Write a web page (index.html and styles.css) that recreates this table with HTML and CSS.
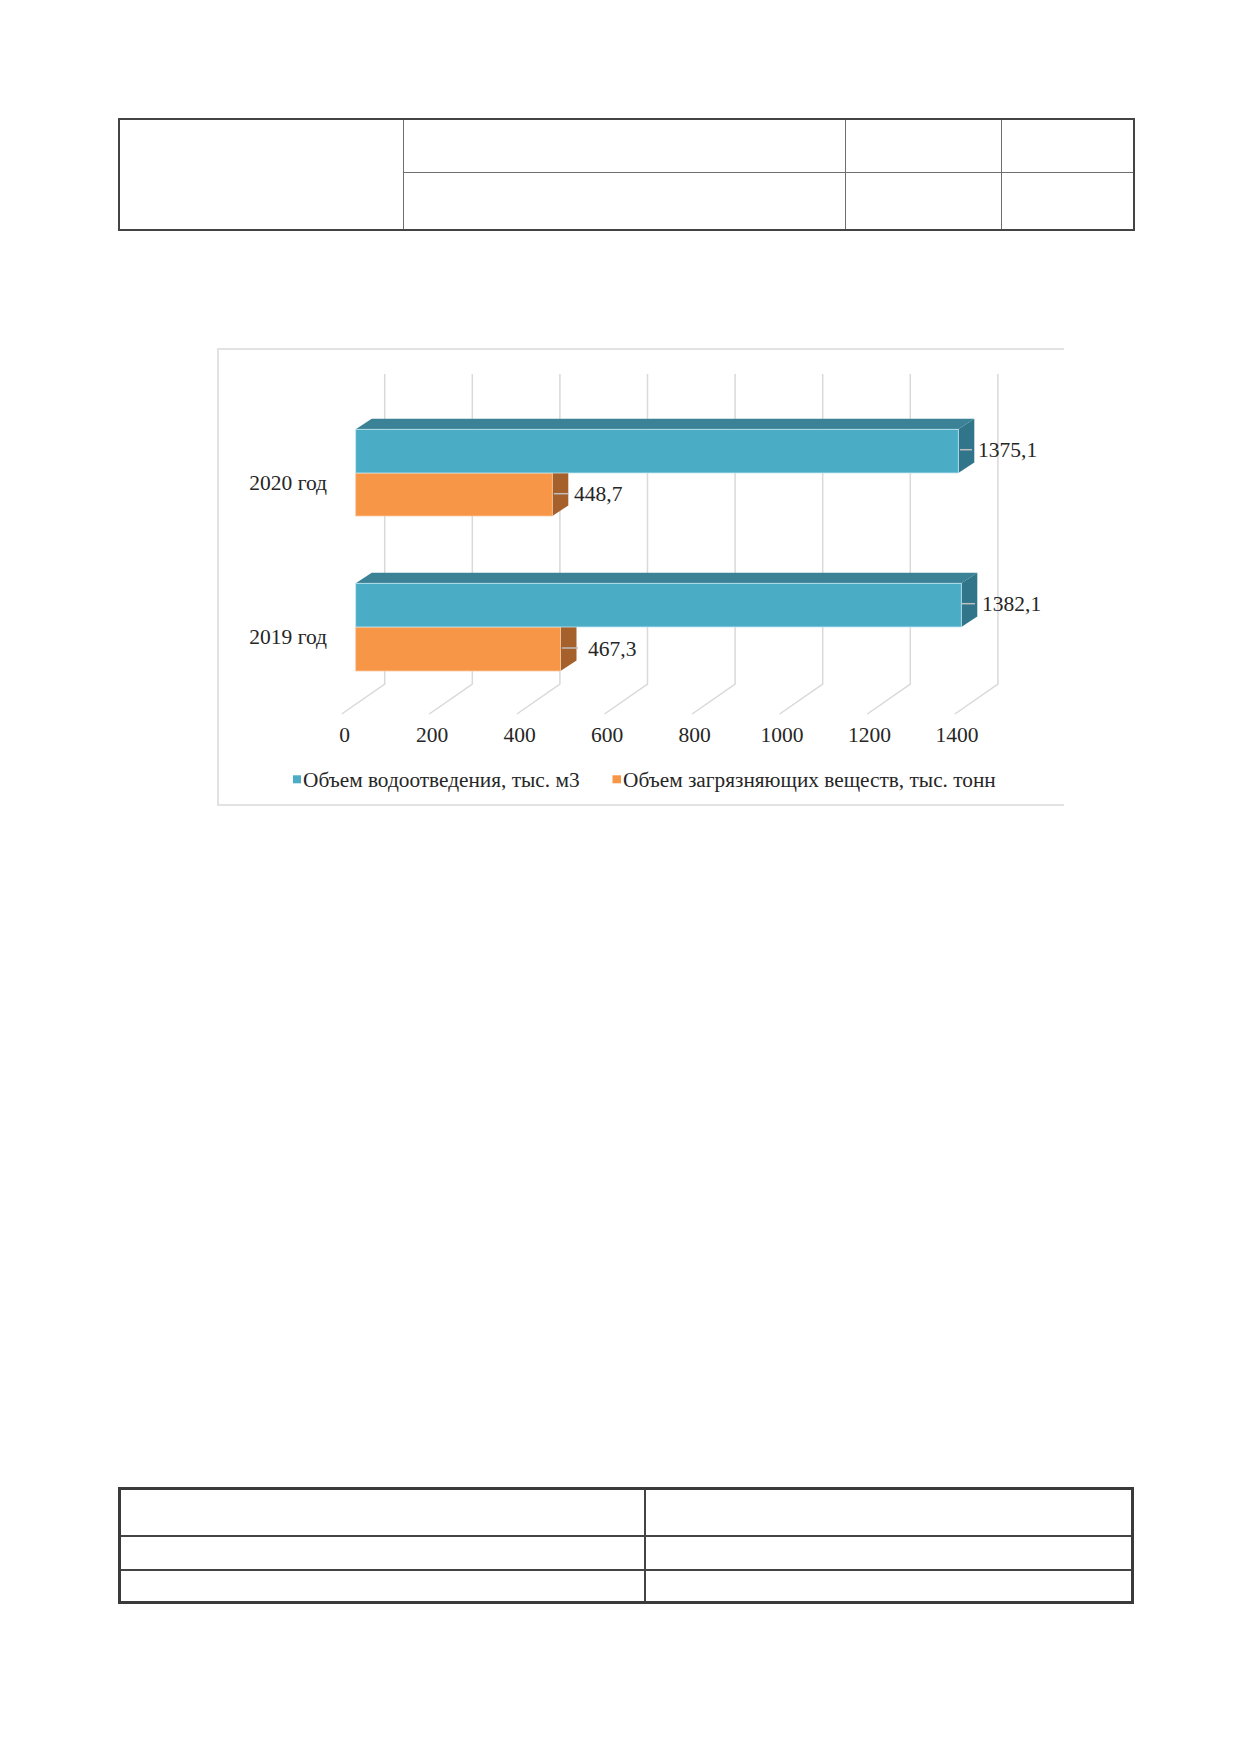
FILE: index.html
```html
<!DOCTYPE html>
<html lang="ru">
<head>
<meta charset="utf-8">
<title>Диаграмма</title>
<link rel="stylesheet" href="styles.css">
</head>
<body>
<div class="page">
  <table class="t1">
    <colgroup><col class="c1"><col class="c2"><col class="c3"><col class="c4"></colgroup>
    <tr class="r1"><td rowspan="2"></td><td></td><td></td><td></td></tr>
    <tr class="r2"><td></td><td></td><td></td></tr>
  </table>

  <div class="chart">
    <svg class="chart-svg" viewBox="220 349 843 454" width="843" height="454" xmlns="http://www.w3.org/2000/svg">
      <g class="grid" fill="none" stroke="#d9d9d9" stroke-width="1.5">
        <polyline points="385.7,373 385.7,683 342.7,713"/>
        <polyline points="473.3,373 473.3,683 430.3,713"/>
        <polyline points="560.9,373 560.9,683 517.9,713"/>
        <polyline points="648.5,373 648.5,683 605.5,713"/>
        <polyline points="736.1,373 736.1,683 693.1,713"/>
        <polyline points="823.7,373 823.7,683 780.7,713"/>
        <polyline points="911.3,373 911.3,683 868.3,713"/>
        <polyline points="998.9,373 998.9,683 955.9,713"/>
      </g>

      <!-- 2020 -->
      <polygon points="553.3,472 569.3,461.5 569.3,504.5 553.3,515" fill="#a5602b"/>
      <rect x="356.7" y="472" width="196.6" height="43" fill="#f79646" stroke="#fbc9a0" stroke-width="0.8"/>
      <polygon points="356.7,428.3 372.7,417.8 975.3,417.8 959.3,428.3" fill="#3b8297"/>
      <polygon points="959.3,428.3 975.3,417.8 975.3,461.5 959.3,472" fill="#31758a"/>
      <rect x="356.7" y="428.3" width="602.6" height="43.7" fill="#4bacc6" stroke="#c4e6f0" stroke-width="0.8"/>

      <!-- 2019 -->
      <polygon points="561.5,626 577.5,615.5 577.5,659.5 561.5,670" fill="#a5602b"/>
      <rect x="356.7" y="626" width="204.8" height="44" fill="#f79646" stroke="#fbc9a0" stroke-width="0.8"/>
      <polygon points="356.7,582.3 372.7,571.8 978.3,571.8 962.3,582.3" fill="#3b8297"/>
      <polygon points="962.3,582.3 978.3,571.8 978.3,615.5 962.3,626" fill="#31758a"/>
      <rect x="356.7" y="582.3" width="605.6" height="43.7" fill="#4bacc6" stroke="#c4e6f0" stroke-width="0.8"/>

      <g class="leaders" stroke="#bfbfbf" stroke-width="1.5">
        <line x1="961" y1="448.7" x2="973" y2="448.7"/>
        <line x1="555" y1="492.7" x2="569" y2="492.7"/>
        <line x1="963" y1="602.7" x2="976" y2="602.7"/>
        <line x1="563" y1="647" x2="579" y2="647"/>
      </g>

      <g class="lbl">
        <text x="979" y="456">1375,1</text>
        <text x="575" y="500">448,7</text>
        <text x="983" y="610">1382,1</text>
        <text x="589" y="654.5">467,3</text>
        <text x="328" y="489" text-anchor="end">2020 год</text>
        <text x="328" y="642.5" text-anchor="end">2019 год</text>
      </g>

      <g class="lbl" text-anchor="middle">
        <text x="345.5" y="740.5">0</text>
        <text x="433" y="740.5">200</text>
        <text x="520.5" y="740.5">400</text>
        <text x="608" y="740.5">600</text>
        <text x="695.5" y="740.5">800</text>
        <text x="783" y="740.5">1000</text>
        <text x="870.5" y="740.5">1200</text>
        <text x="958" y="740.5">1400</text>
      </g>

      <rect x="294" y="774.3" width="8" height="8" fill="#4bacc6"/>
      <text class="leg" x="304" y="786">Объем водоотведения, тыс. м3</text>
      <rect x="613.5" y="774.3" width="8.5" height="8" fill="#f79646"/>
      <text class="leg" x="624" y="786">Объем загрязняющих веществ, тыс. тонн</text>
    </svg>
  </div>

  <table class="t2">
    <colgroup><col class="d1"><col class="d2"></colgroup>
    <tr class="s1"><td></td><td></td></tr>
    <tr class="s2"><td></td><td></td></tr>
    <tr class="s3"><td></td><td></td></tr>
  </table>
</div>
</body>
</html>
```

FILE: styles.css
```css
html, body {
  margin: 0;
  padding: 0;
  background: #ffffff;
}

body {
  font-family: "Liberation Serif", "Times New Roman", serif;
  color: #262626;
}

.page {
  width: 1240px;
  min-height: 1754px;
  box-sizing: border-box;
  padding: 118px 0 0 118px;
  display: flex;
  flex-direction: column;
  align-items: flex-start;
}

.t1 {
  border-collapse: collapse;
  table-layout: fixed;
  width: 1015px;
  border: 2px solid #444444;
}

.t1 td {
  border: 1px solid #6e6e6e;
  padding: 0;
}

.t1 .c1 { width: 284px; }
.t1 .c2 { width: 442px; }
.t1 .c3 { width: 156px; }
.t1 .c4 { width: 133px; }

.t1 .r1 { height: 53px; }
.t1 .r2 { height: 58px; }

.chart {
  margin-top: 117px;
  margin-left: 99px;
  width: 845px;
  height: 454px;
  border-top: 2px solid #e2e2e2;
  border-left: 2px solid #e2e2e2;
  border-bottom: 2px solid #e2e2e2;
  box-sizing: content-box;
  display: flex;
}

.chart-svg {
  display: block;
  overflow: visible;
}

.lbl {
  font-family: "Liberation Serif", "Times New Roman", serif;
  font-size: 21.5px;
  fill: #262626;
}

.leg {
  font-family: "Liberation Serif", "Times New Roman", serif;
  font-size: 21.3px;
  fill: #262626;
}

.t2 {
  margin-top: 681px;
  border-collapse: collapse;
  table-layout: fixed;
  width: 1013px;
  border: 3px solid #3a3a3a;
}

.t2 td {
  border: 2px solid #444444;
  padding: 0;
}

.t2 .d1 { width: 525px; }
.t2 .d2 { width: 488px; }

.t2 .s1 { height: 47px; }
.t2 .s2 { height: 34px; }
.t2 .s3 { height: 33px; }
```
